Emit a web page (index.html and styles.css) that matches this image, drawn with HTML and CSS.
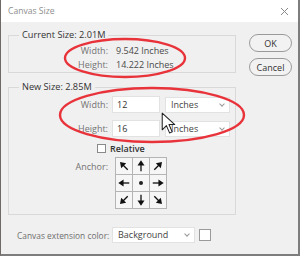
FILE: index.html
```html
<!DOCTYPE html>
<html lang="en">
<head>
    <meta charset="UTF-8">
    <title>Canvas Size</title>
    <link rel="stylesheet" href="styles.css">
</head>
<body>

    <div class="dialog">
        <div class="titlebar">
            <span class="title">Canvas Size</span>
            <svg class="close" width="9" height="9" viewBox="0 0 9 9">
                <path d="M1 1 L8 8 M8 1 L1 8" stroke="#8a8a8a" stroke-width="1" fill="none"/>
            </svg>
        </div>

        <div class="content">
            <div class="left">
                <fieldset class="group current">
                    <legend>Current Size: 2.01M</legend>
                    <div class="info-row">
                        <span class="label">Width:</span>
                        <span class="value">9.542 Inches</span>
                    </div>
                    <div class="info-row">
                        <span class="label">Height:</span>
                        <span class="value">14.222 Inches</span>
                    </div>
                </fieldset>

                <fieldset class="group new">
                    <legend>New Size: 2.85M</legend>
                    <div class="field-row">
                        <span class="label">Width:</span>
                        <div class="input">12</div>
                        <div class="select unit">Inches<span class="chev"></span></div>
                    </div>
                    <div class="field-row">
                        <span class="label">Height:</span>
                        <div class="input">16</div>
                        <div class="select unit">Inches<span class="chev"></span></div>
                    </div>
                    <div class="check-row">
                        <span class="checkbox"></span>
                        <span class="check-label">Relative</span>
                    </div>
                    <div class="anchor-row">
                        <span class="label">Anchor:</span>
                        <div class="anchor">
                            <div class="cell"><svg class="arrow r-nw" viewBox="0 0 16 16"><path d="M2 8 H10"/><polygon points="8.5,4 14.5,8 8.5,12"/></svg></div>
                            <div class="cell"><svg class="arrow r-n" viewBox="0 0 16 16"><path d="M2 8 H10"/><polygon points="8.5,4 14.5,8 8.5,12"/></svg></div>
                            <div class="cell"><svg class="arrow r-ne" viewBox="0 0 16 16"><path d="M2 8 H10"/><polygon points="8.5,4 14.5,8 8.5,12"/></svg></div>
                            <div class="cell"><svg class="arrow r-w" viewBox="0 0 16 16"><path d="M2 8 H10"/><polygon points="8.5,4 14.5,8 8.5,12"/></svg></div>
                            <div class="cell"><span class="dot"></span></div>
                            <div class="cell"><svg class="arrow" viewBox="0 0 16 16"><path d="M2 8 H10"/><polygon points="8.5,4 14.5,8 8.5,12"/></svg></div>
                            <div class="cell"><svg class="arrow r-sw" viewBox="0 0 16 16"><path d="M2 8 H10"/><polygon points="8.5,4 14.5,8 8.5,12"/></svg></div>
                            <div class="cell"><svg class="arrow r-s" viewBox="0 0 16 16"><path d="M2 8 H10"/><polygon points="8.5,4 14.5,8 8.5,12"/></svg></div>
                            <div class="cell"><svg class="arrow r-se" viewBox="0 0 16 16"><path d="M2 8 H10"/><polygon points="8.5,4 14.5,8 8.5,12"/></svg></div>
                        </div>
                    </div>
                </fieldset>
            </div>

            <div class="buttons">
                <button class="btn">OK</button>
                <button class="btn">Cancel</button>
            </div>
        </div>

        <div class="ext-row">
            <span class="ext-label">Canvas extension color:</span>
            <div class="select ext">Background<span class="chev"></span></div>
            <span class="swatch"></span>
        </div>
    </div>

    <!-- annotations drawn on top of the screenshot -->
    <svg class="marks" width="300" height="256" viewBox="0 0 300 256">
        <ellipse cx="125" cy="58" rx="60" ry="19" fill="none" stroke="#e8333b" stroke-width="2.4"/>
        <ellipse cx="152" cy="115" rx="92" ry="27" fill="none" stroke="#e8333b" stroke-width="2.4"/>
    </svg>

    <svg class="cursor" width="15" height="23" viewBox="0 0 14 22">
        <path d="M1 1 L1 17 L5 13 L8 20 L10.5 19 L7.5 12 L13 12 Z" fill="#fff" stroke="#222" stroke-width="1" stroke-linejoin="round"/>
    </svg>

</body>
</html>
```

FILE: styles.css
```css
* {
    box-sizing: border-box;
}

body {
    margin: 0;
    font-family: 'Open Sans', 'Noto Sans', sans-serif;
    font-size: 9px;
    color: #444;
    background: #f0f0f0;
    position: relative;
    width: 300px;
    height: 256px;
    overflow: hidden;
}

.dialog {
    width: 300px;
    height: 256px;
    background: #f0f0f0;
    border-left: 1px solid #6e6a66;
    border-right: 2px solid #7d7d7d;
    border-bottom: 2px solid #7d7d7d;
}

.titlebar {
    height: 22px;
    background: #fff;
    display: flex;
    align-items: center;
    justify-content: space-between;
    padding: 0 9px 0 7px;
}

.title {
    color: #8e8e8e;
    font-size: 8.6px;
}

.content {
    display: flex;
    padding: 7px 0 0 7px;
}

.left {
    width: 228px;
}

.group {
    margin: 0;
    padding: 0;
    border: 1px solid #d9d9d9;
    min-width: 0;
}

.group legend {
    margin-left: 10px;
    padding: 0 3px;
    line-height: 12px;
    color: #333;
    font-size: 9.2px;
}

.current {
    padding: 2px 0 1px;
}

.info-row {
    display: flex;
    height: 14px;
    align-items: center;
}

.label {
    width: 99px;
    text-align: right;
    color: #737373;
    flex-shrink: 0;
}

.value {
    margin-left: 8px;
    color: #4a4a4a;
}

.new {
    margin-top: 8px;
    padding: 3px 0 5px;
}

.field-row {
    display: flex;
    align-items: center;
    height: 17px;
    margin-bottom: 7px;
}

.input {
    margin-left: 4px;
    width: 48px;
    height: 17px;
    background: #fff;
    border: 1px solid #e2e2e2;
    padding-left: 4px;
    line-height: 15px;
    color: #333;
}

.select {
    position: relative;
    height: 16px;
    background: #fff;
    border: 1px solid #e2e2e2;
    padding-left: 5px;
    line-height: 14px;
    color: #444;
}

.unit {
    margin-left: 5px;
    width: 65px;
}

.chev {
    position: absolute;
    right: 5px;
    top: 4px;
    width: 4px;
    height: 4px;
    border-right: 1px solid #999;
    border-bottom: 1px solid #999;
    transform: rotate(45deg);
}

.check-row {
    display: flex;
    align-items: center;
    height: 13px;
    margin-top: -2px;
    padding-left: 88px;
}

.checkbox {
    width: 9px;
    height: 9px;
    background: #fff;
    border: 1px solid #8a8a8a;
}

.check-label {
    margin-left: 4px;
    color: #333;
    font-weight: 600;
}

.anchor-row {
    display: flex;
    margin-top: 2px;
}

.anchor-row .label {
    padding-top: 3px;
}

.anchor {
    margin-left: 7px;
    display: grid;
    grid-template-columns: repeat(3, 17px);
    grid-template-rows: repeat(3, 17px);
    border-top: 1px solid #b4b4b4;
    border-left: 1px solid #b4b4b4;
}

.cell {
    border-right: 1px solid #b4b4b4;
    border-bottom: 1px solid #b4b4b4;
    background: #f6f6f6;
    display: flex;
    align-items: center;
    justify-content: center;
}

.arrow {
    width: 14px;
    height: 14px;
}

.arrow path {
    stroke: #111;
    stroke-width: 1.5;
}

.arrow polygon {
    fill: #111;
}

.r-nw { transform: rotate(-135deg); }
.r-n { transform: rotate(-90deg); }
.r-ne { transform: rotate(-45deg); }
.r-w { transform: rotate(180deg); }
.r-sw { transform: rotate(135deg); }
.r-s { transform: rotate(90deg); }
.r-se { transform: rotate(45deg); }

.dot {
    width: 4px;
    height: 4px;
    border-radius: 50%;
    background: #222;
}

.buttons {
    margin-left: 13px;
    padding-top: 5px;
    display: flex;
    flex-direction: column;
    gap: 6px;
}

.btn {
    width: 43px;
    height: 18px;
    border: 1px solid #9a9a9a;
    border-radius: 9px;
    background: #f2f2f2;
    font-family: inherit;
    font-size: 9px;
    color: #333;
    padding: 0;
}

.ext-row {
    display: flex;
    align-items: center;
    margin-top: 12px;
    padding-left: 16px;
}

.ext-label {
    width: 95px;
    flex-shrink: 0;
    white-space: nowrap;
    font-size: 8.4px;
    color: #6e6e6e;
}

.ext {
    width: 83px;
}

.swatch {
    margin-left: 4px;
    width: 12px;
    height: 12px;
    background: #fff;
    border: 1px solid #9a9a9a;
}

.marks {
    position: absolute;
    left: 0;
    top: 0;
    pointer-events: none;
}

.cursor {
    position: absolute;
    left: 161px;
    top: 112px;
}
```
